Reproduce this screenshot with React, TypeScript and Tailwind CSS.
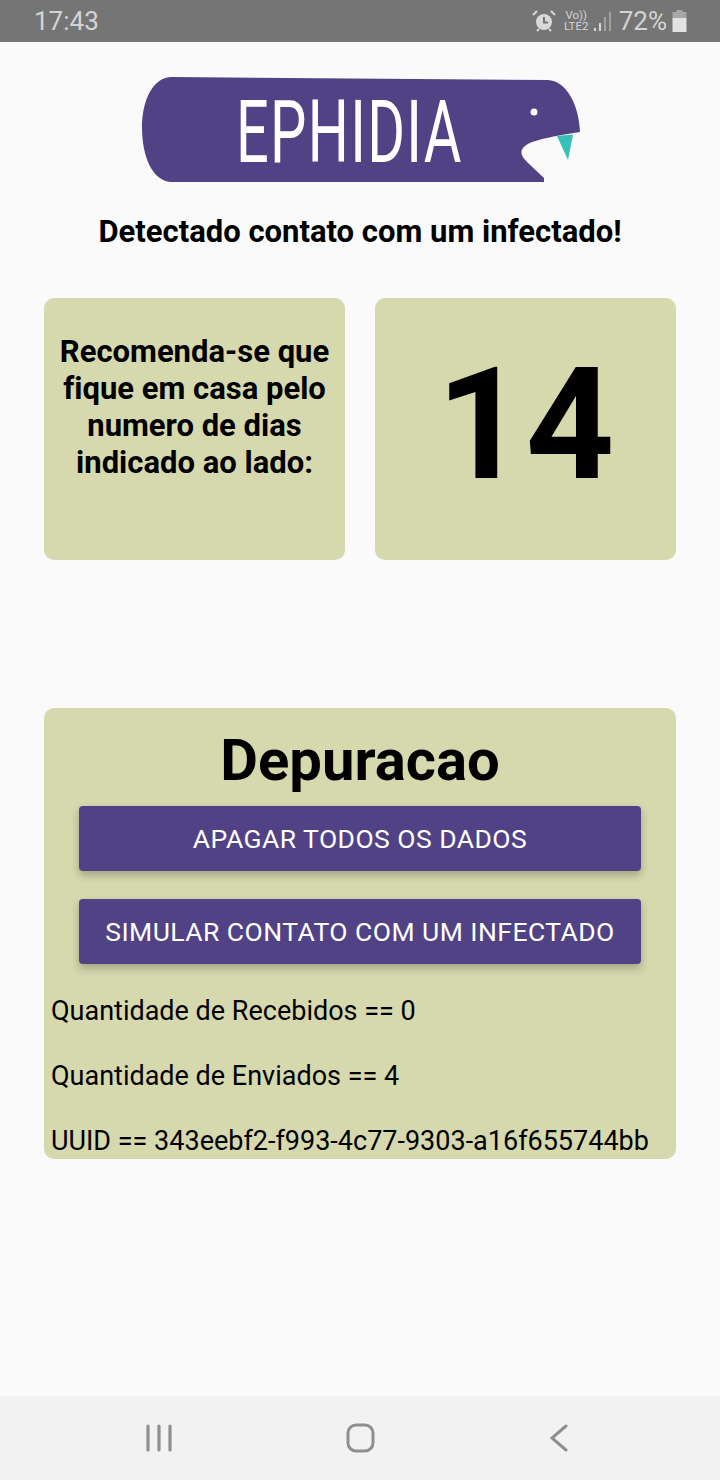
import React from "react";

const roboto = { fontFamily: "Roboto, sans-serif" };

function StatusBar() {
  return (
    <div className="flex h-[42px] items-center justify-between bg-[#757575] pl-[34px] pr-[33px] text-[#d4d4d4]">
      <span className="text-[26px] leading-none">17:43</span>
      <div className="flex items-center">
        <svg width="26" height="24" viewBox="0 0 26 24" className="mr-[6px]">
          <circle cx="13" cy="13" r="8" fill="#d8d8d8" />
          <path d="M13 8v5.500h4" fill="none" stroke="#757575" strokeWidth="2" />
          <path d="M2 6l4-4M24 6l-4-4M6 22l2-2M20 22l-2-2" stroke="#d8d8d8" strokeWidth="2" fill="none" />
        </svg>
        <div className="mr-[3px] flex w-[27px] flex-col items-center text-[11.500px] leading-[11px]">
          <span>Vo))</span>
          <span>LTE2</span>
        </div>
        <svg width="19" height="24" viewBox="0 0 19 24" className="mr-[7px]">
          <rect x="1" y="19" width="2" height="3" fill="#d8d8d8" />
          <rect x="6" y="14" width="2" height="8" fill="#d8d8d8" />
          <rect x="11" y="8" width="2" height="14" fill="#a0a0a0" />
          <rect x="16" y="3" width="2" height="19" fill="#a0a0a0" />
        </svg>
        <span className="text-[26px] leading-none">72%</span>
        <svg width="15" height="22" viewBox="0 0 15 22" className="ml-[5px]">
          <rect x="4.500" y="0" width="6" height="3" fill="#a8a8a8" />
          <rect x="0.500" y="2" width="14" height="6" fill="#a8a8a8" />
          <rect x="0.500" y="8" width="14" height="14" fill="#e2e2e2" />
        </svg>
      </div>
    </div>
  );
}

function Logo() {
  return (
    <div className="relative ml-[98px] h-[105px] w-[438px]">
      <svg width="438" height="105" viewBox="142 77 438 105" className="block">
        <path
          d="M172 77 L548 80 C566 81 579 104 580 132 C555 136 532 140 525 146 C519 151 521 156 527 162 L544 178 L544 182 L172 182 C152 182 142 155 142 128 C142 100 153 77 172 77 Z"
          fill="#514285"
        />
        <path d="M557 136 L573 134.500 L568 160 Z" fill="#36c1b8" />
        <circle cx="534" cy="112" r="3.500" fill="#fafafa" />
      </svg>
      <span className="absolute left-[94px] top-[3px] origin-left scale-x-[0.655] text-[88px] font-normal leading-[104px] tracking-[2px] text-white">
        EPHIDIA
      </span>
    </div>
  );
}

function NavBar() {
  return (
    <div className="flex h-[84px] items-center bg-[#f2f2f2] pl-[146px]">
      <svg width="28" height="28" viewBox="0 0 28 28">
        <path d="M2 2v24M13 2v24M24 2v24" stroke="#8f8f8f" strokeWidth="3.200" strokeLinecap="round" fill="none" />
      </svg>
      <svg width="30" height="30" viewBox="0 0 30 30" className="ml-[172px]">
        <rect x="2" y="2" width="25" height="26" rx="8" stroke="#8f8f8f" strokeWidth="3" fill="none" />
      </svg>
      <svg width="18" height="28" viewBox="0 0 18 28" className="ml-[174px]">
        <path d="M16 2L2 14l14 12" stroke="#8f8f8f" strokeWidth="3" strokeLinecap="round" fill="none" />
      </svg>
    </div>
  );
}

function ActionButton({ label }: { label: string }) {
  return (
    <button className="flex h-[65px] w-[562px] items-center justify-center rounded-[4px] bg-[#514285] text-[26.500px] tracking-[0.45px] text-white shadow-[0_4px_8px_rgba(0,0,0,0.25)]">
      {label}
    </button>
  );
}

export default function App() {
  return (
    <div className="flex h-[1480px] w-[720px] flex-col overflow-hidden bg-[#fafafa] text-black" style={roboto}>
      <StatusBar />
      <main className="flex-1 px-[44px] pt-[35px]">
        <Logo />
        <h1 className="mt-[31px] text-center text-[31px] font-bold leading-[38px]">
          Detectado contato com um infectado!
        </h1>
        <div className="mt-[47px] grid h-[262px] grid-cols-2 gap-[30px]">
          <div className="rounded-[10px] bg-[#d6d8ae] px-[10px] pt-[35px] text-center text-[31px] font-bold leading-[37px] [font-variant-ligatures:none]">
            Recomenda-se que fique em casa pelo numero de dias indicado ao lado:
          </div>
          <div className="flex items-center justify-center rounded-[10px] bg-[#d6d8ae] pb-[8px] text-[155px] font-bold leading-none">
            14
          </div>
        </div>
        <section className="mt-[148px] flex h-[451px] flex-col overflow-hidden rounded-[10px] bg-[#d6d8ae]">
          <h2 className="mt-[20px] text-center text-[58px] font-bold leading-[65px]">Depuracao</h2>
          <div className="mt-[13px] flex flex-col items-center gap-[28px]">
            <ActionButton label="APAGAR TODOS OS DADOS" />
            <ActionButton label="SIMULAR CONTATO COM UM INFECTADO" />
          </div>
          <div className="mt-[32px] flex flex-col gap-[34px] pl-[7px] text-[27px] leading-[31px]">
            <p>Quantidade de Recebidos == 0</p>
            <p>Quantidade de Enviados == 4</p>
            <p>UUID == 343eebf2-f993-4c77-9303-a16f655744bb</p>
          </div>
        </section>
      </main>
      <NavBar />
    </div>
  );
}
